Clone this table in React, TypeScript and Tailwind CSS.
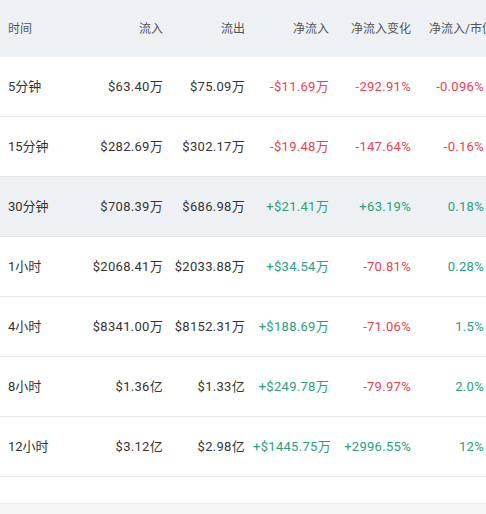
import React from 'react';

type Row = {
  label: string;
  inflow: string;
  outflow: string;
  net: string;
  change: string;
  ratio: string;
  active?: boolean;
};

const rows: Row[] = [
  { label: '5分钟', inflow: '$63.40万', outflow: '$75.09万', net: '-$11.69万', change: '-292.91%', ratio: '-0.096%' },
  { label: '15分钟', inflow: '$282.69万', outflow: '$302.17万', net: '-$19.48万', change: '-147.64%', ratio: '-0.16%' },
  { label: '30分钟', inflow: '$708.39万', outflow: '$686.98万', net: '+$21.41万', change: '+63.19%', ratio: '0.18%', active: true },
  { label: '1小时', inflow: '$2068.41万', outflow: '$2033.88万', net: '+$34.54万', change: '-70.81%', ratio: '0.28%' },
  { label: '4小时', inflow: '$8341.00万', outflow: '$8152.31万', net: '+$188.69万', change: '-71.06%', ratio: '1.5%' },
  { label: '8小时', inflow: '$1.36亿', outflow: '$1.33亿', net: '+$249.78万', change: '-79.97%', ratio: '2.0%' },
  { label: '12小时', inflow: '$3.12亿', outflow: '$2.98亿', net: '+$1445.75万', change: '+2996.55%', ratio: '12%' },
];

const tone = (v: string) => (v.startsWith('-') ? 'text-[#e5434f]' : 'text-[#2a9d7c]');

const grid = 'grid grid-cols-[90px_81px_82px_84px_82px_73px]';

export default function App() {
  return (
    <div className="w-[486px] h-[514px] overflow-hidden bg-white font-['Roboto','Noto_Sans_CJK_SC',sans-serif]">
      <div className="w-[492px]">
        <div className={`${grid} h-[57px] items-center bg-[#eef1f4] text-[12px] text-[#555]`}>
          <div className="pl-2">时间</div>
          <div className="pr-2 text-right">流入</div>
          <div className="pr-2 text-right">流出</div>
          <div className="pr-2 text-right">净流入</div>
          <div className="pr-2 text-right">净流入变化</div>
          <div className="pl-[10px] whitespace-nowrap">净流入/市值</div>
        </div>
        {rows.map(r => (
          <div
            key={r.label}
            className={`${grid} h-[60px] items-center border-b border-[#e6e6e6] text-[13px] tracking-[0.3px] ${r.active ? 'bg-[#eef1f4]' : 'bg-white'}`}
          >
            <div className="pl-2 text-[#333] tracking-normal">{r.label}</div>
            <div className="pr-2 text-right text-[#333]">{r.inflow}</div>
            <div className="pr-2 text-right text-[#333]">{r.outflow}</div>
            <div className={`pr-2 text-right whitespace-nowrap ${tone(r.net)}`}>{r.net}</div>
            <div className={`pr-2 text-right ${tone(r.change)}`}>{r.change}</div>
            <div className={`pr-2 text-right ${tone(r.ratio)}`}>{r.ratio}</div>
          </div>
        ))}
        <div className="h-[26px]" />
        <div className="h-[20px] bg-[#f5f5f5] border-t border-[#ececec]" />
      </div>
    </div>
  );
}
